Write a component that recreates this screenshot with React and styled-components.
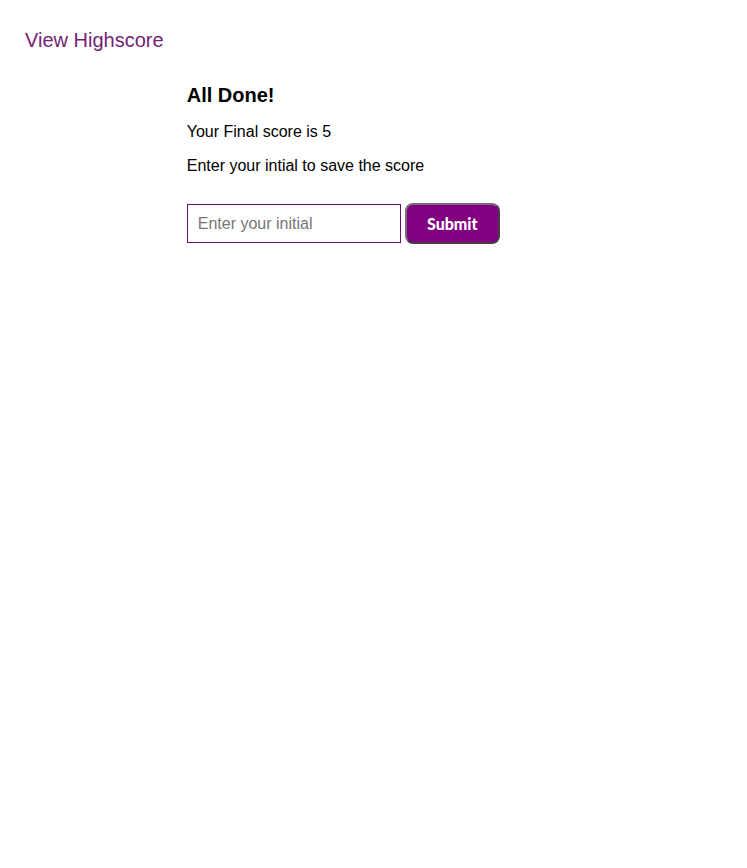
import React from "react";
import styled, { createGlobalStyle } from "styled-components";

const Global = createGlobalStyle`
  html, body { margin: 0; padding: 0; background: #fff; }
  body { font-family: "Liberation Sans", Arial, sans-serif; color: #000; }
`;

const Header = styled.header`
  display: flex;
  padding: 28px 25px 0;
`;

const HighscoreLink = styled.a`
  font-size: 20px;
  color: #731f73;
  text-decoration: none;
  line-height: 24px;
`;

const Main = styled.main`
  margin: 0 25%;
  padding-top: 31px;
  display: flex;
  flex-direction: column;
`;

const Title = styled.h2`
  margin: 0 0 16px;
  font-size: 20px;
  font-weight: bold;
  line-height: 24px;
`;

const Text = styled.p`
  margin: 0 0 16px;
  font-size: 16px;
  line-height: 18px;
`;

const Form = styled.form`
  display: flex;
  align-items: center;
  gap: 4px;
  margin-top: 12px;
`;

const Input = styled.input`
  box-sizing: border-box;
  width: 214px;
  height: 39px;
  border: 1px solid #6a136a;
  padding: 0 10px;
  font-family: "Liberation Sans", Arial, sans-serif;
  font-size: 16px;
  outline: none;
  &::placeholder { color: #777; }
`;

const Button = styled.button`
  box-sizing: border-box;
  width: 95px;
  height: 41px;
  border-radius: 8px;
  background: #800080;
  border: 2px solid #4a3a4a;
  border-top-color: #7a6a7a;
  border-left-color: #7a6a7a;
  color: #fff;
  font-family: Lato, "Open Sans", sans-serif;
  font-weight: 900;
  font-size: 16px;
  cursor: pointer;
`;

export default function App() {
  return (
    <>
      <Global />
      <Header>
        <HighscoreLink href="#">View Highscore</HighscoreLink>
      </Header>
      <Main>
        <Title>All Done!</Title>
        <Text>Your Final score is 5</Text>
        <Text>Enter your intial to save the score</Text>
        <Form onSubmit={(e) => e.preventDefault()}>
          <Input placeholder="Enter your initial" />
          <Button type="submit">Submit</Button>
        </Form>
      </Main>
    </>
  );
}
